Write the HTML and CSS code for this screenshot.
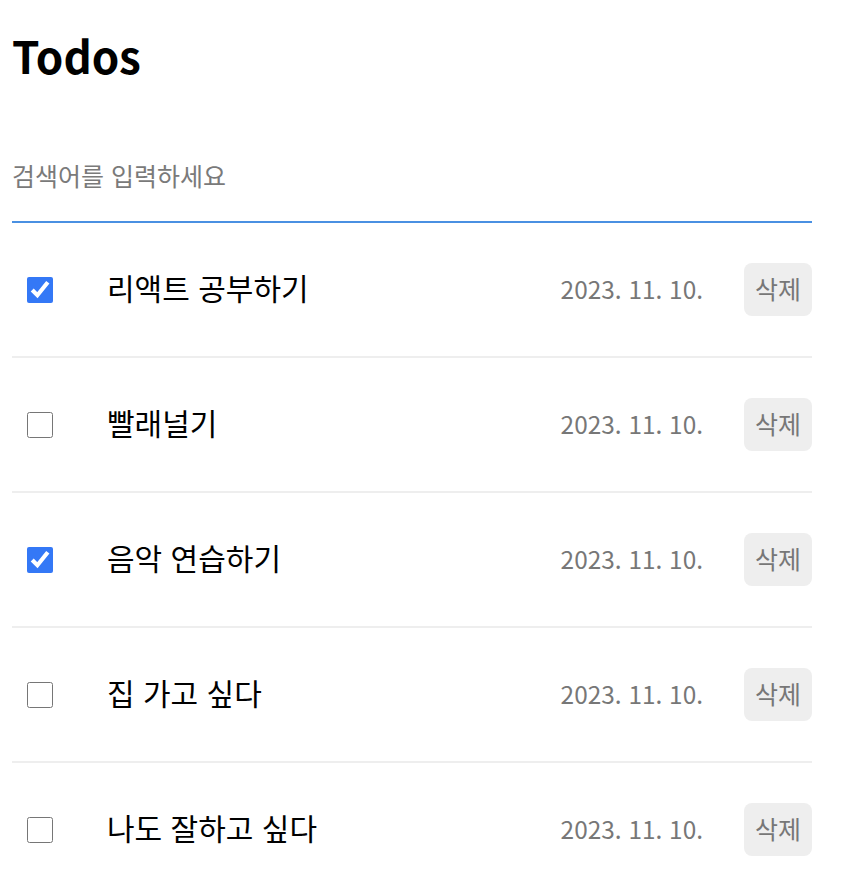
FILE: index.html
```html
<!DOCTYPE html>
<html lang="ko">
<head>
  <meta charset="UTF-8" />
  <meta name="viewport" content="width=device-width, initial-scale=1.0" />
  <title>Todos</title>
  <link rel="stylesheet" href="styles.css">
</head>
<body>
  <div class="container">
    <h1 class="title">Todos</h1>

    <input class="search" type="text" placeholder="검색어를 입력하세요" />

    <div class="todo-list">
      <div class="todo-item">
        <input class="check" type="checkbox" checked />
        <div class="content">리액트 공부하기</div>
        <div class="date">2023. 11. 10.</div>
        <button class="delete-btn">삭제</button>
      </div>
      <div class="todo-item">
        <input class="check" type="checkbox" />
        <div class="content">빨래널기</div>
        <div class="date">2023. 11. 10.</div>
        <button class="delete-btn">삭제</button>
      </div>
      <div class="todo-item">
        <input class="check" type="checkbox" checked />
        <div class="content">음악 연습하기</div>
        <div class="date">2023. 11. 10.</div>
        <button class="delete-btn">삭제</button>
      </div>
      <div class="todo-item">
        <input class="check" type="checkbox" />
        <div class="content">집 가고 싶다</div>
        <div class="date">2023. 11. 10.</div>
        <button class="delete-btn">삭제</button>
      </div>
      <div class="todo-item">
        <input class="check" type="checkbox" />
        <div class="content">나도 잘하고 싶다</div>
        <div class="date">2023. 11. 10.</div>
        <button class="delete-btn">삭제</button>
      </div>
    </div>
  </div>
</body>
</html>
```

FILE: styles.css
```css
body {
  margin: 0;
  font-family: 'Noto Sans CJK KR', 'Noto Sans', sans-serif;
  background-color: #fff;
  color: #000;
}

.container {
  width: 800px;
  padding: 0 12px;
}

.title {
  margin: 23px 0 0;
  font-size: 44px;
  font-weight: 700;
  line-height: 64px;
}

.search {
  display: block;
  box-sizing: border-box;
  width: 100%;
  margin-top: 73px;
  padding: 0 0 31px;
  border: none;
  border-bottom: 2px solid #4a90e2;
  font-family: inherit;
  font-size: 25px;
  line-height: 30px;
  outline: none;
}

.search::placeholder {
  color: #7a7a7a;
}

.todo-list {
  display: flex;
  flex-direction: column;
}

.todo-item {
  display: flex;
  align-items: center;
  padding: 40px 0;
  border-bottom: 2px solid #eeeeee;
}

.check {
  width: 26px;
  height: 26px;
  margin: 0 0 0 15px;
  accent-color: #3478f6;
}

.content {
  flex: 1;
  margin-left: 54px;
  padding-bottom: 5px;
  font-size: 30px;
}

.date {
  padding-bottom: 3px;
  color: #777;
  font-size: 24.4px;
}

.delete-btn {
  margin-left: 41px;
  height: 53px;
  padding: 0 11px 3px;
  border: none;
  border-radius: 8px;
  background-color: #eeeeee;
  color: #777;
  font-family: inherit;
  font-size: 25px;
  cursor: pointer;
}
```
